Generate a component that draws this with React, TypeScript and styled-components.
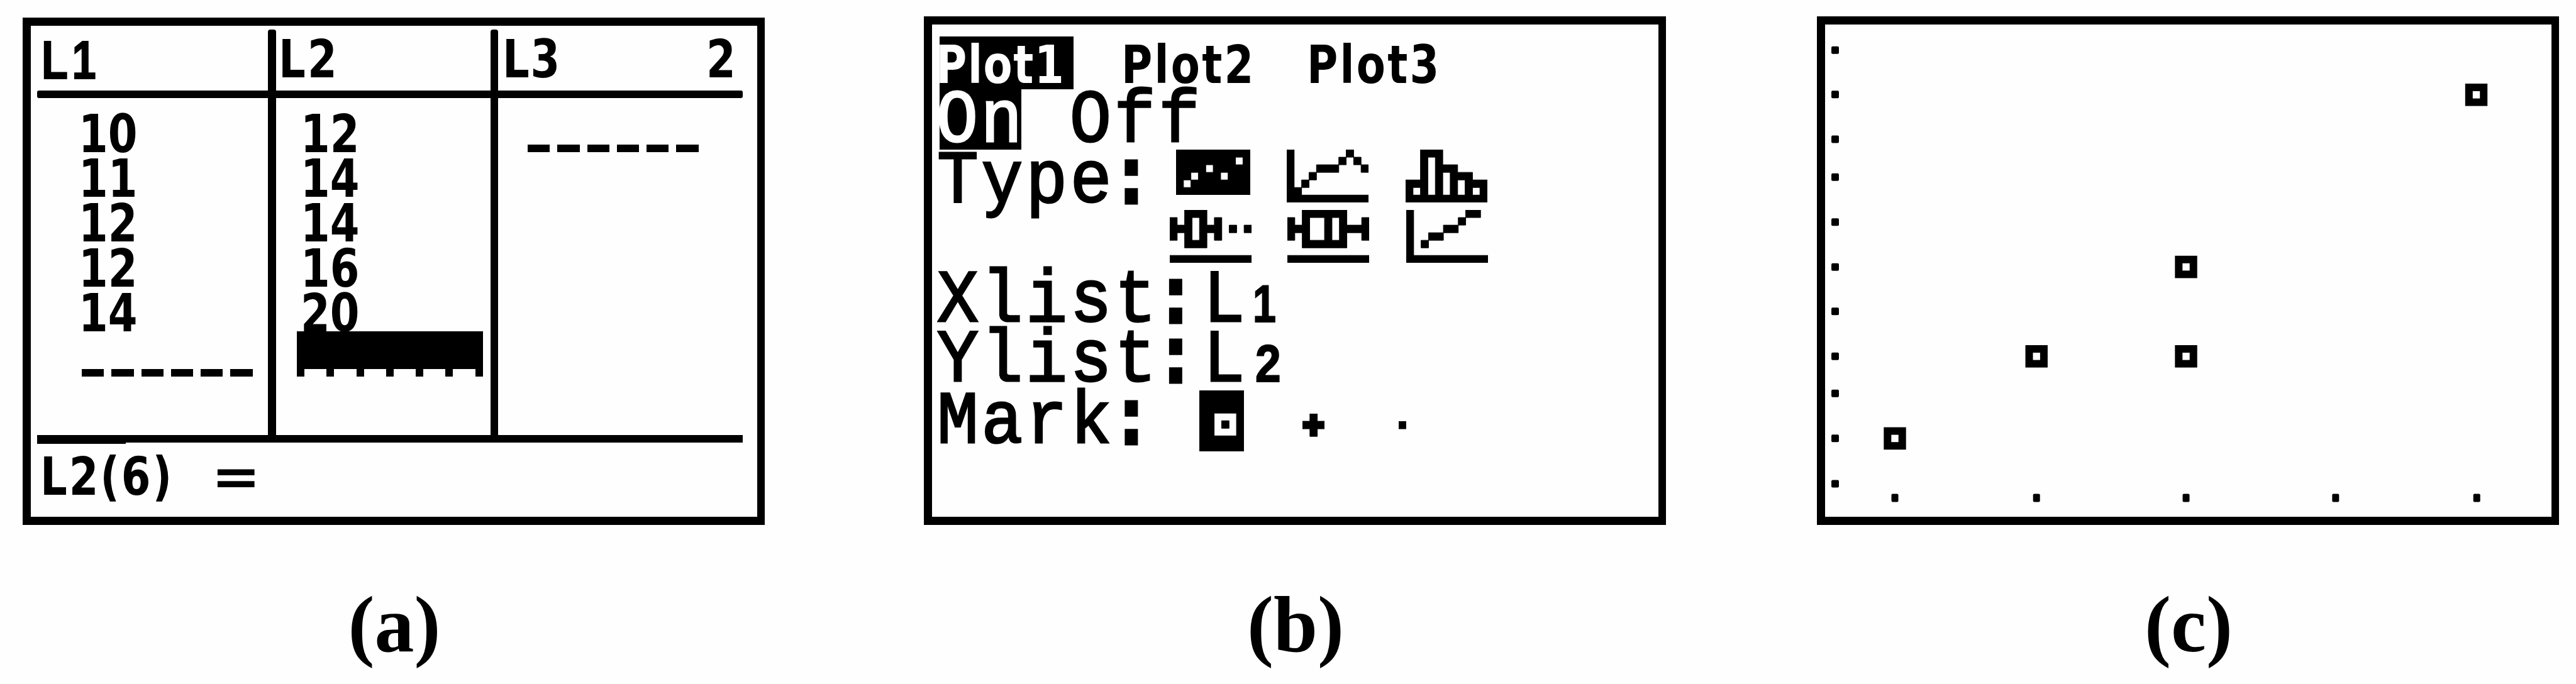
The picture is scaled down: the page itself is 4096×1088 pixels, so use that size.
import React from "react";
import styled, { createGlobalStyle } from "styled-components";

const INK = "#000";
const PAPER = "#fefefe";

const GlobalStyle = createGlobalStyle`
  body { margin: 0; background: ${PAPER}; color: ${INK}; overflow: hidden; }
  * { box-sizing: border-box; }
`;

/* ---------- page ---------- */

const Page = styled.main`
  width: 4096px;
  height: 1088px;
  padding-left: 36px;
  display: flex;
  align-items: flex-start;
  background: ${PAPER};
`;

const Figure = styled.figure<{ $gap?: number; $top: number }>`
  margin: ${(p) => p.$top}px 0 0 ${(p) => p.$gap ?? 0}px;
  width: 1180px;
  display: flex;
  flex-direction: column;
`;

const Screen = styled.div<{ $height: number }>`
  height: ${(p) => p.$height}px;
  border: solid ${INK};
  border-width: 13px 12px 13px 13px;
  display: flex;
  flex-direction: column;
  align-items: flex-start;
`;

const Caption = styled.figcaption`
  margin-top: 79px;
  padding-left: 2px;
  height: 160px;
  text-align: center;
  font: bold 126px/160px "Liberation Serif", serif;
`;

/* ---------- calculator lettering ---------- */

const SmallText = styled.span<{ $sx?: number; $size?: number; $spacing?: number; $white?: boolean }>`
  display: block;
  white-space: pre;
  font-family: "DejaVu Sans", sans-serif;
  font-weight: bold;
  font-size: ${(p) => p.$size ?? 83}px;
  line-height: inherit;
  letter-spacing: ${(p) => p.$spacing ?? 0}px;
  color: ${(p) => (p.$white ? PAPER : INK)};
  transform: scaleX(${(p) => p.$sx ?? 0.81});
  transform-origin: left center;
`;

const FootlessText = styled(SmallText)`
  font-family: "Liberation Sans", sans-serif;
  -webkit-text-stroke: 2px ${INK};
`;

const LargeText = styled.span<{ $white?: boolean }>`
  display: block;
  white-space: pre;
  font-family: "Liberation Mono", monospace;
  font-size: 118px;
  line-height: 104px;
  letter-spacing: 5.1px;
  color: ${(p) => (p.$white ? PAPER : INK)};
  -webkit-text-stroke: 3px ${(p) => (p.$white ? PAPER : INK)};
  transform: scaleX(0.93);
  transform-origin: left center;
`;

const Colon = styled.b`
  font-weight: normal;
  margin: 0 7px 0 -7px;
  -webkit-text-stroke: 9px ${INK};
`;

/* ---------- list editor ---------- */

const Table = styled.div`
  margin: 6px 0 0 10px;
  display: grid;
  grid-template-columns: 367px 13px 341px 12px 389px;
  grid-template-rows: 97px 12px 536px;
`;

const HeadCell = styled.div<{ $col: number; $left: number }>`
  grid-column: ${(p) => p.$col};
  grid-row: 1;
  padding-left: ${(p) => p.$left}px;
  display: flex;
  line-height: 96px;
`;

const HeadLabel = styled.div<{ $width: number }>`
  width: ${(p) => p.$width}px;
`;

const ColumnRule = styled.div<{ $col: number }>`
  grid-column: ${(p) => p.$col};
  grid-row: 1 / -1;
  background: ${INK};
  border-radius: 4px 4px 0 0;
`;

const HeadRule = styled.div`
  grid-column: 1 / -1;
  grid-row: 2;
  background: ${INK};
  border-radius: 3px;
`;

const BodyCell = styled.div<{ $col: number; $left: number }>`
  grid-column: ${(p) => p.$col};
  grid-row: 3;
  padding: 22px 0 0 ${(p) => p.$left}px;
  line-height: 71.2px;
`;

const Dashes = styled.div<{ $top: number; $left?: number; $white?: boolean }>`
  display: flex;
  gap: 12px;
  padding: ${(p) => p.$top}px 0 0 ${(p) => p.$left ?? 0}px;
  i {
    width: 35.3px;
    height: 12px;
    background: ${(p) => (p.$white ? PAPER : INK)};
  }
`;

const Cursor = styled.div`
  margin: -7px 0 0 -6px;
  width: 296px;
  height: 72px;
  background: ${INK};
`;

const FootRule = styled.div`
  margin-left: 10px;
  width: 1122px;
  height: 12px;
  background: ${INK};
`;

const FootRuleNub = styled.div`
  margin-left: 10px;
  width: 141px;
  height: 2px;
  background: ${INK};
`;

const EntryLine = styled.div`
  display: flex;
  padding-left: 15px;
  line-height: 106px;
`;

const EntryLabel = styled.div`
  width: 272px;
`;

const DashRow = (p: { top: number; left?: number; white?: boolean }) => (
  <Dashes $top={p.top} $left={p.left} $white={p.white}>
    {[0, 1, 2, 3, 4, 5].map((n) => (
      <i key={n} />
    ))}
  </Dashes>
);

const ListEditor = () => (
  <Screen $height={807}>
    <Table>
      <HeadCell $col={1} $left={7}>
        <FootlessText $sx={0.8} $size={86} $spacing={8}>L1</FootlessText>
      </HeadCell>
      <HeadCell $col={3} $left={4}>
        <SmallText $spacing={4}>L2</SmallText>
      </HeadCell>
      <HeadCell $col={5} $left={7}>
        <HeadLabel $width={328}>
          <SmallText $spacing={2}>L3</SmallText>
        </HeadLabel>
        <SmallText>2</SmallText>
      </HeadCell>
      <BodyCell $col={1} $left={66}>
        {["10", "11", "12", "12", "14"].map((v, i) => (
          <SmallText key={i}>{v}</SmallText>
        ))}
        <DashRow top={53} left={5} />
      </BodyCell>
      <BodyCell $col={3} $left={39}>
        {["12", "14", "14", "16", "20"].map((v, i) => (
          <SmallText key={i}>{v}</SmallText>
        ))}
        <Cursor>
          <DashRow top={60} left={12} white />
        </Cursor>
      </BodyCell>
      <BodyCell $col={5} $left={0}>
        <DashRow top={52} left={47} />
      </BodyCell>
      <ColumnRule $col={2} />
      <ColumnRule $col={4} />
      <HeadRule />
    </Table>
    <FootRule />
    <FootRuleNub />
    <EntryLine>
      <EntryLabel>
        <SmallText $spacing={3.5}>L2(6)</SmallText>
      </EntryLabel>
      <SmallText $sx={1.13}>=</SmallText>
    </EntryLine>
  </Screen>
);

/* ---------- bitmap icons ---------- */

const ICONS = {
  scatter: [
    "##########",
    "########.#",
    "####.#####",
    "##.###.###",
    "#.########",
    "##########",
  ],
  line: [
    "#.......#..",
    "#......#.#.",
    "#...###...#",
    "#..#.......",
    "#.#........",
    "##.........",
    "###########",
  ],
  histogram: [
    "..###......",
    "..#.#......",
    "..#.###....",
    "..#.#.###..",
    "###.#.#.###",
    "#.#.#.#.#.#",
    "###########",
  ],
  modBox: [
    "..###......",
    "#.#.#.#....",
    "###.###.#.#",
    "#.#.#.#....",
    "..###......",
    "...........",
    "###########",
  ],
  box: [
    "..######...",
    "#.#..#.#..#",
    "###..#.####",
    "#.#..#.#..#",
    "..######...",
    "...........",
    "###########",
  ],
  normal: [
    "#.......##.",
    "#......#...",
    "#....##....",
    "#..##......",
    "#.#........",
    "#..........",
    "###########",
  ],
  boxMark: [
    "######",
    "######",
    "######",
    "##...#",
    "##.#.#",
    "##...#",
    "######",
    "######",
  ],
  plusMark: [".#.", "###", ".#."],
  dotMark: ["#"],
};

const IconSvg = styled.svg<{ $left?: number; $top?: number }>`
  display: block;
  flex: none;
  margin: ${(p) => p.$top ?? 0}px 0 0 ${(p) => p.$left ?? 0}px;
`;

const PX = 11.82;
const PY = 12.05;

const Icon = ({ name, left, top }: { name: keyof typeof ICONS; left?: number; top?: number }) => {
  const rows = ICONS[name];
  const cols = rows[0].length;
  const d = rows
    .flatMap((row, y) =>
      [...row.matchAll(/#+/g)].map((m) => `M${m.index} ${y}h${m[0].length}v1h-${m[0].length}z`)
    )
    .join("");
  return (
    <IconSvg
      $left={left}
      $top={top}
      width={cols * PX}
      height={rows.length * PY}
      viewBox={`0 0 ${cols} ${rows.length}`}
      preserveAspectRatio="none"
    >
      <path d={d} fill={INK} stroke={INK} strokeWidth="0.08" />
    </IconSvg>
  );
};

/* ---------- plot setup ---------- */

const Tabs = styled.div`
  margin: 19px 0 0 12px;
  height: 84px;
  line-height: 91px;
  display: flex;
`;

const Tab = styled.div<{ $on?: boolean; $left?: number }>`
  width: 213px;
  margin-left: ${(p) => p.$left ?? 0}px;
  padding-left: ${(p) => (p.$on ? 0 : 1)}px;
  background: ${(p) => (p.$on ? INK : "transparent")};
  span { margin-left: -6px; }
`;

const Row = styled.div<{ $height: number }>`
  height: ${(p) => p.$height}px;
  padding-left: 8px;
  display: flex;
`;

const Label = styled.div<{ $width: number }>`
  flex: none;
  width: ${(p) => p.$width}px;
`;

const Selected = styled.div`
  flex: none;
  margin: 0 77px 0 4px;
  width: 130px;
  height: 96px;
  background: ${INK};
  span { margin-left: -5px; }
`;

const Subscript = styled.div<{ $top: number }>`
  margin-top: ${(p) => p.$top}px;
  line-height: 105px;
`;

const PlotSetup = () => (
  <Screen $height={809}>
    <Tabs>
      <Tab $on><SmallText $white $spacing={2}>Plot1</SmallText></Tab>
      <Tab $left={81}><SmallText $spacing={4}>Plot2</SmallText></Tab>
      <Tab $left={82}><SmallText $spacing={4}>Plot3</SmallText></Tab>
    </Tabs>
    <Row $height={95.9}>
      <Selected><LargeText $white>On</LargeText></Selected>
      <LargeText>Off</LargeText>
    </Row>
    <Row $height={95.9}>
      <Label $width={380}><LargeText>Type<Colon>:</Colon></LargeText></Label>
      <Icon name="scatter" />
      <Icon name="line" left={58} />
      <Icon name="histogram" left={59} />
    </Row>
    <Row $height={94.1}>
      <Icon name="modBox" left={370} />
      <Icon name="box" left={57} />
      <Icon name="normal" left={59} />
    </Row>
    <Row $height={95.3}>
      <Label $width={502}><LargeText>Xlist<Colon>:</Colon>L</LargeText></Label>
      <Subscript $top={3}><FootlessText $sx={0.8}>1</FootlessText></Subscript>
    </Row>
    <Row $height={98.3}>
      <Label $width={506}><LargeText>Ylist<Colon>:</Colon>L</LargeText></Label>
      <Subscript $top={3}><FootlessText $sx={0.88}>2</FootlessText></Subscript>
    </Row>
    <Row $height={96}>
      <Label $width={417}><LargeText>Mark<Colon>:</Colon></LargeText></Label>
      <Icon name="boxMark" />
      <Icon name="plusMark" left={93} top={37} />
      <Icon name="dotMark" left={118} top={49} />
    </Row>
  </Screen>
);

/* ---------- scatter graph ---------- */

const yTicks = [79.7, 150.2, 221.6, 281.8, 353.3, 424.8, 495.2, 566.7, 625.8, 697.3, 769.4];
const xTicks = [3013, 3238.2, 3476, 3713.8, 3938.2];
const points = [
  [3013, 697.3],
  [3238.2, 566.7],
  [3476, 566.7],
  [3476, 424.5],
  [3937.5, 150.7],
];

const Graph = () => (
  <Screen $height={809}>
    <svg width="1155" height="783" viewBox="2902 39 1155 783">
      {yTicks.map((y) => (
        <rect key={y} x="2912" y={y - 6} width="12" height="12" rx="2" />
      ))}
      {xTicks.map((x) => (
        <rect key={x} x={x - 5.5} y="785.5" width="11" height="13" rx="2" />
      ))}
      {points.map(([x, y]) => (
        <rect
          key={`${x}-${y}`}
          x={x - 11.7}
          y={y - 11.7}
          width="23.4"
          height="23.6"
          fill="none"
          stroke={INK}
          strokeWidth="12"
        />
      ))}
    </svg>
  </Screen>
);

export default function App() {
  return (
    <>
      <GlobalStyle />
      <Page>
        <Figure $top={28}>
          <ListEditor />
          <Caption>(a)</Caption>
        </Figure>
        <Figure $top={26} $gap={253}>
          <PlotSetup />
          <Caption>(b)</Caption>
        </Figure>
        <Figure $top={26} $gap={240}>
          <Graph />
          <Caption>(c)</Caption>
        </Figure>
      </Page>
    </>
  );
}
